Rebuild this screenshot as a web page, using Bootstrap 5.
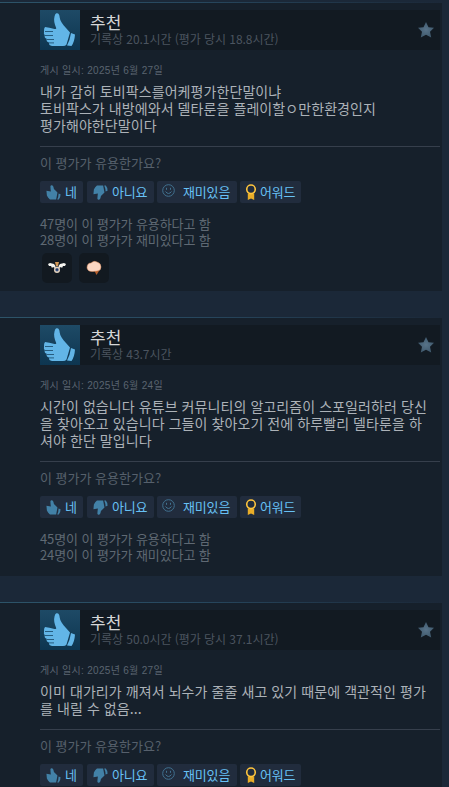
<!DOCTYPE html>
<html lang="ko">
<head>
<meta charset="utf-8">
<meta name="viewport" content="width=device-width, initial-scale=1">
<title>평가</title>
<link href="https://cdn.jsdelivr.net/npm/bootstrap@5.3.0/dist/css/bootstrap.min.css" rel="stylesheet">
<style>
html, body { height: 787px; overflow: hidden; }
body { background: #1b2838; font-family: "Noto Sans CJK KR", "Noto Sans", sans-serif; color: #acb2b8; }
.review { width: 442px; padding: 7px 2px 0 40px; margin-bottom: 26px; background: #16202b; border-top: 1px solid; border-image: linear-gradient(90deg, #2d5469, #27475e 45%, #1b2838) 1; }
.r1 { height: 289px; margin-top: 2px; } .r2 { height: 259px; } .r3 { height: 185px; margin-bottom: 0; }
.verdict { height: 40px; background: #121a22; }
.thumb-box { width: 40px; height: 40px; background: linear-gradient(#1e4a66, #0d3550); }
.verdict-text { padding-left: 10px; padding-top: 2px; }
.title { font-size: 17px; line-height: 20px; color: #d6d7d8; }
.hours { font-size: 12px; line-height: 14px; color: #4b545f; letter-spacing: -.05px; }
.star { margin: 0 6px 0 auto; }
.posted { font-family: "Liberation Sans", "Noto Sans CJK KR", sans-serif; font-size: 10px; line-height: 12px; color: #5a6470; margin-top: 15px; letter-spacing: .3px; }
.body-text { font-size: 14px; line-height: 17px; margin-top: 6px; letter-spacing: .08px; }
.rule { height: 1px; background: #363f4c; margin-top: 12px; }
.ask { font-size: 13px; line-height: 16px; color: #56606c; margin-top: 8px; }
.votes { gap: 4px; margin-top: 10px; height: 22px; }
.vote { height: 22px; background: #212c3d; color: #67c1f5; border-radius: 2px; font-size: 13px; line-height: 20px; }
.vote span { padding-bottom: 1px; letter-spacing: -.15px; }
.v1 { width: 43px; padding-left: 6px; } .v2 { width: 67px; padding-left: 6px; }
.v3 { width: 80px; padding-left: 5px; margin-left: -1px; } .v4 { width: 61px; padding-left: 5px; margin-left: -1px; }
.v3 svg { margin: 0 8px 3px 0; } .v4 svg { margin-right: 3px; }
.counts { font-size: 13px; line-height: 16px; color: #5f6973; margin-top: 13px; letter-spacing: -.1px; }
.awards { gap: 7px; padding-left: 2px; margin-top: 5px; }
.award { width: 30px; height: 30px; border-radius: 5px; background: #121920; }
svg { display: block; flex: none; }
</style>
<script src="https://cdn.jsdelivr.net/npm/bootstrap@5.3.0/dist/js/bootstrap.bundle.min.js"></script>
</head>
<body>
<svg width="0" height="0" class="position-absolute">
<defs>
<radialGradient id="sg"><stop offset="0" stop-color="#587389"/><stop offset="1" stop-color="#405a6e"/></radialGradient>
<symbol id="thumb" viewBox="0 0 40 40"><path d="M16 3.500C18.500 2.800 19.500 4.500 19.700 7.500C20 11 22.500 14 26 18L30 22.500L26.500 34.500Q25.500 36 23 36H12Q8.500 35.500 9 32.500Q6 32 6.700 28.800Q4 28 4.800 25Q3.500 24 4 21.500Q3.800 18 5 17Q9 17.500 14.500 19Q17 19.500 16 17.500C14.500 14 13.500 10 14.500 6.500Q15 4 16 3.500Z"/><path d="M31 23L35 24.500Q34.500 32 31.500 36L27 35.500Q30 30 31 23Z"/><path d="M5 21.500H13M5 25.500H13M7 29.500H14M9 32.900H14" fill="none" stroke="#174564" stroke-width=".8"/></symbol>
<symbol id="mini" viewBox="4 3 32 34"><path d="M15 3.500C19 3 20 7 21 12L29 20L26 36H12L8 32L5 27L4 16L14 18Q13 10 13 5Z"/><path d="M31.500 22L36 24Q36 32 32 36H28.500Q31.500 29 31.500 22Z"/></symbol>
<symbol id="star" viewBox="0 0 16 16"><path fill="url(#sg)" d="M8 0L10.500 5.200L16 5.700L12 9.800L13.200 15.500L8 12.800L2.800 15.500L4 9.800L0 5.700L5.500 5.200Z"/></symbol>
<symbol id="smile" viewBox="0 0 13 13"><g fill="none" stroke="#41718f"><circle cx="6.500" cy="6.500" r="5.800"/><path d="M3.500 7.500Q6.500 11.500 9.500 7.500M4.500 3.800V5.800M8.500 3.800V5.800"/></g></symbol>
<symbol id="ribbon" viewBox="0 0 10 15"><path fill="#e9ad28" d="M2 9H8V15L5 13.500L2 15Z"/><circle cx="5" cy="5" r="4" fill="#212c3d" stroke="#ffc53d" stroke-width="1.500"/></symbol>
</defs>
</svg>

<article class="review r1">
  <div class="verdict d-flex align-items-center">
    <div class="thumb-box"><svg width="40" height="40" fill="#62b5e7"><use href="#thumb"/></svg></div>
    <div class="verdict-text align-self-start"><div class="title">추천</div><div class="hours">기록상 20.1시간 (평가 당시 18.8시간)</div></div>
    <svg class="star" width="16" height="16"><use href="#star"/></svg>
  </div>
  <div class="posted">게시 일시: 2025년 6월 27일</div>
  <div class="body-text text-nowrap">내가 감히 토비팍스를어케평가한단말이냐<br>토비팍스가 내방에와서 델타룬을 플레이할ㅇ만한환경인지<br>평가해야한단말이다</div>
  <div class="rule"></div>
  <div class="ask">이 평가가 유용한가요?</div>
  <div class="votes d-flex">
    <div class="vote v1 d-flex align-items-center"><svg width="15" height="15" fill="#4281a7" class="me-1"><use href="#mini"/></svg><span>네</span></div>
    <div class="vote v2 d-flex align-items-center"><svg width="15" height="15" fill="#4281a7" class="me-1"><use href="#mini" transform="matrix(1 0 0 -1 0 15)"/></svg><span>아니요</span></div>
    <div class="vote v3 d-flex align-items-center"><svg width="13" height="13"><use href="#smile"/></svg><span>재미있음</span></div>
    <div class="vote v4 d-flex align-items-center"><svg width="12" height="16"><use href="#ribbon"/></svg><span>어워드</span></div>
  </div>
  <div class="counts">47명이 이 평가가 유용하다고 함<br>28명이 이 평가가 재미있다고 함</div>
  <div class="awards d-flex">
    <div class="award d-flex align-items-center justify-content-center"><svg width="20" height="14" viewBox="0 0 20 14"><path fill="#f4f4ef" d="M1 3L3 2L7 3L8.500 5L8 7L6 6L5 7L4 5L2 5ZM19 3L17 2L13 3L11.500 5L12 7L14 6L15 7L16 5L18 5Z"/><path fill="#d49a59" d="M8 1H12L11 5H9Z"/><ellipse cx="10" cy="8.700" rx="3" ry="3.300" fill="#e5d2bc"/><circle cx="10" cy="8.700" r="1.700" fill="#3b5a91"/><circle cx="10" cy="8.700" r=".7" fill="#161d30"/></svg></div>
    <div class="award d-flex align-items-center justify-content-center"><svg width="18" height="18" viewBox="0 0 18 18"><path fill="#b45e2c" d="M9 11L14 12L11.500 16L10 13Z"/><path fill="#fbd7c3" stroke="#dd8e5c" stroke-width=".5" d="M2 9Q2 4 6 4Q9 1 12 3Q16 4 16 8Q16 12 12 12L8 12.500Q3 13 2 9Z"/></svg></div>
  </div>
</article>

<article class="review r2">
  <div class="verdict d-flex align-items-center">
    <div class="thumb-box"><svg width="40" height="40" fill="#62b5e7"><use href="#thumb"/></svg></div>
    <div class="verdict-text align-self-start"><div class="title">추천</div><div class="hours">기록상 43.7시간</div></div>
    <svg class="star" width="16" height="16"><use href="#star"/></svg>
  </div>
  <div class="posted">게시 일시: 2025년 6월 24일</div>
  <div class="body-text text-nowrap">시간이 없습니다 유튜브 커뮤니티의 알고리즘이 스포일러하러 당신<br>을 찾아오고 있습니다 그들이 찾아오기 전에 하루빨리 델타룬을 하<br>셔야 한단 말입니다</div>
  <div class="rule"></div>
  <div class="ask">이 평가가 유용한가요?</div>
  <div class="votes d-flex">
    <div class="vote v1 d-flex align-items-center"><svg width="15" height="15" fill="#4281a7" class="me-1"><use href="#mini"/></svg><span>네</span></div>
    <div class="vote v2 d-flex align-items-center"><svg width="15" height="15" fill="#4281a7" class="me-1"><use href="#mini" transform="matrix(1 0 0 -1 0 15)"/></svg><span>아니요</span></div>
    <div class="vote v3 d-flex align-items-center"><svg width="13" height="13"><use href="#smile"/></svg><span>재미있음</span></div>
    <div class="vote v4 d-flex align-items-center"><svg width="12" height="16"><use href="#ribbon"/></svg><span>어워드</span></div>
  </div>
  <div class="counts">45명이 이 평가가 유용하다고 함<br>24명이 이 평가가 재미있다고 함</div>
</article>

<article class="review r3">
  <div class="verdict d-flex align-items-center">
    <div class="thumb-box"><svg width="40" height="40" fill="#62b5e7"><use href="#thumb"/></svg></div>
    <div class="verdict-text align-self-start"><div class="title">추천</div><div class="hours">기록상 50.0시간 (평가 당시 37.1시간)</div></div>
    <svg class="star" width="16" height="16"><use href="#star"/></svg>
  </div>
  <div class="posted">게시 일시: 2025년 6월 27일</div>
  <div class="body-text text-nowrap">이미 대가리가 깨져서 뇌수가 줄줄 새고 있기 때문에 객관적인 평가<br>를 내릴 수 없음...</div>
  <div class="rule"></div>
  <div class="ask">이 평가가 유용한가요?</div>
  <div class="votes d-flex">
    <div class="vote v1 d-flex align-items-center"><svg width="15" height="15" fill="#4281a7" class="me-1"><use href="#mini"/></svg><span>네</span></div>
    <div class="vote v2 d-flex align-items-center"><svg width="15" height="15" fill="#4281a7" class="me-1"><use href="#mini" transform="matrix(1 0 0 -1 0 15)"/></svg><span>아니요</span></div>
    <div class="vote v3 d-flex align-items-center"><svg width="13" height="13"><use href="#smile"/></svg><span>재미있음</span></div>
    <div class="vote v4 d-flex align-items-center"><svg width="12" height="16"><use href="#ribbon"/></svg><span>어워드</span></div>
  </div>
</article>
</body>
</html>
